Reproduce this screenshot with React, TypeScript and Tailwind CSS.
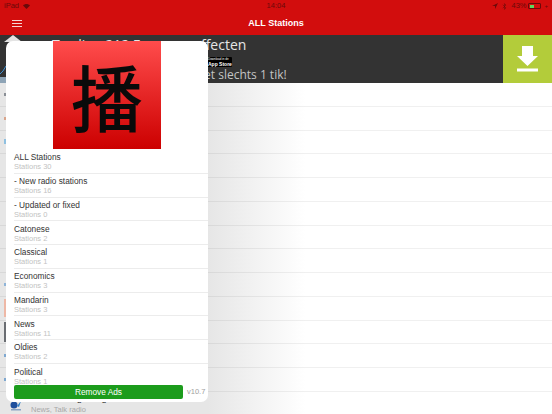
import React from 'react';
import { Bluetooth } from 'lucide-react';

const categories = [
  { name: 'ALL Stations', count: 30 },
  { name: '- New radio stations', count: 16 },
  { name: '- Updated or fixed', count: 0 },
  { name: 'Catonese', count: 2 },
  { name: 'Classical', count: 1 },
  { name: 'Economics', count: 3 },
  { name: 'Mandarin', count: 3 },
  { name: 'News', count: 11 },
  { name: 'Oldies', count: 2 },
  { name: 'Political', count: 1 },
];

// bits of the station logos that peek out left of the popover
const stationIcons = [
  'h-[3px] bg-[#8a8f96]',
  'h-[3px] bg-[#d9a58c]',
  'h-[5px] bg-[#8fc0e0]',
  'h-0',
  'h-0',
  'h-0',
  'h-0',
  'h-0',
  'h-[3px] bg-[#8fb4d8]',
  'h-[18px] bg-[#eeb8a6]',
  'h-[20px] bg-[#6a6d72]',
  'h-[3px] bg-[#7fa8d0]',
  'h-[3px] bg-[#7fa8d0]',
];

const StatusBar: React.FC = () => (
  <div className="flex h-[12px] items-center justify-between px-[4px] text-[7.500px] text-[#6a0a0a]">
    <div className="flex w-[100px] items-center gap-[4px]">
      <span>iPad</span>
      <svg width="7" height="5" viewBox="0 0 14 10" fill="currentColor">
        <path d="M7 10 0 3c4-4 10-4 14 0z" />
      </svg>
    </div>
    <span>14:04</span>
    <div className="flex w-[100px] items-center justify-end gap-[2px]">
      <svg width="6" height="6" viewBox="0 0 10 10" fill="currentColor">
        <path d="M10 0 0 5h5v5z" />
      </svg>
      <Bluetooth size={7} strokeWidth={2} className="mx-[1px]" />
      <span>43%</span>
      <div className="flex h-[6px] w-[13px] items-stretch rounded-[1px] border-[0.5px] border-[#6a0a0a] p-[0.5px]">
        <div className="w-[43%] bg-[#5fd85f]" />
      </div>
      <span className="ml-[1px] text-[6px] leading-none">+</span>
    </div>
  </div>
);

const NavRow: React.FC = () => (
  <div className="grid h-[23px] grid-cols-[1fr_auto_1fr] items-center pl-[12px] pr-[12px]">
    <div className="flex w-[10px] flex-col gap-[2px]">
      <div className="h-[1px] bg-[#f6d5d5]" />
      <div className="h-[1px] bg-[#f6d5d5]" />
      <div className="h-[1px] bg-[#f6d5d5]" />
    </div>
    <span className="text-[9px] font-bold text-white">ALL Stations</span>
    <div />
  </div>
);

const AdBanner: React.FC = () => (
  <div className="relative flex h-[48px] bg-[#333333]">
    <svg className="absolute left-0 top-[28px]" width="6" height="14" viewBox="0 0 6 14" fill="none">
      <path d="M0 11 3 8 6 3" stroke="#3f8fd0" strokeWidth="1" />
    </svg>
    <div className="absolute bottom-0 left-0 h-[6px] w-[6px] bg-[#8ea4b6]" />
    <div className="flex min-w-0 flex-1 flex-col font-['Open_Sans',sans-serif]">
      <div className="h-[20px] whitespace-nowrap pl-[52px] text-[14px] leading-[20px] text-[#e6e6e6]">
        Trading 212 Forex en effecten
      </div>
      <div className="ml-[207px] mt-[2px] flex h-[11px] w-[25px] flex-col justify-center whitespace-nowrap rounded-[1px] bg-black pl-[1px] font-['Liberation_Sans',sans-serif] text-white">
        <span className="text-[3px] leading-[3px]">Download in de</span>
        <span className="text-[5px] font-bold leading-[6px]">App Store</span>
      </div>
      <div className="whitespace-nowrap pl-[132px] text-[12px] leading-[16px] text-[#c4c4c4]">
        Handel nu met slechts 1 tik!
      </div>
    </div>
    <div className="flex w-[49px] shrink-0 items-center justify-center bg-[#b3cc3a]">
      <svg width="21" height="26" viewBox="0 0 21 26" fill="white">
        <path d="M5 0h11v10h5L10.500 20 0 10h5z" />
        <rect x="0" y="22.500" width="21" height="3" />
      </svg>
    </div>
  </div>
);

const StationList: React.FC = () => (
  <div className="h-[331px] overflow-hidden bg-[linear-gradient(90deg,#e6e6e6_0,#e6e6e6_208px,#ffffff_305px)]">
    {stationIcons.map((color, i) => (
      <div key={i} className="flex h-[23.750px] items-center border-b border-black/[0.06] pl-[4px]">
        <div className={`w-[2px] ${color}`} />
      </div>
    ))}
    <div className="flex items-start gap-[9px] pl-[10px] font-['Liberation_Sans',sans-serif]">
      <svg className="mt-[5px]" width="12" height="14" viewBox="0 0 12 14">
        <circle cx="4" cy="8" r="3.500" fill="#1f4f9c" />
        <path d="M7 9 11 4 9 10z" fill="#2f7fc8" />
        <rect x="1" y="12" width="10" height="1.500" fill="#8aa4c4" />
      </svg>
      <div className="whitespace-nowrap">
        <div className="text-[9.500px] leading-[11px] text-[#222]">RTHK Hong Kong Radio 1 Talk time</div>
        <div className="mt-[2px] text-[7.500px] leading-[10px] text-[#a8a8a8]">News, Talk radio</div>
      </div>
    </div>
  </div>
);

const MenuPopover: React.FC = () => (
  <>
    <svg className="absolute left-[4px] top-[35px]" width="18" height="7" viewBox="0 0 18 7">
      <path d="M9 0 18 7H0z" fill="#e4e4e4" />
    </svg>
    <div className="absolute left-[6px] top-[41px] h-[361px] w-[202px] overflow-hidden rounded-[7px] bg-white font-['Liberation_Sans',sans-serif]">
      <div className="mx-auto flex h-[108px] w-[108px] items-center justify-center bg-[linear-gradient(180deg,#ff4c4c,#cc0000)]">
        <span className="font-['Noto_Sans_CJK_SC',sans-serif] text-[72px] font-medium leading-[108px] text-[#0a0a0a]">播</span>
      </div>
      <div className="mt-[1px] h-[235px] overflow-hidden">
        {categories.map((c) => (
          <div key={c.name} className="ml-[8px] flex h-[23.750px] flex-col justify-center border-b border-[#ececec] pt-[1px] last:border-b-0">
            <div className="text-[8.300px] leading-[10px] text-[#333]">{c.name}</div>
            <div className="text-[7.500px] leading-[9px] text-[#c2c2c2]">Stations {c.count}</div>
          </div>
        ))}
      </div>
      <div className="flex items-center pl-[8px]">
        <button className="h-[14px] w-[169px] rounded-[2px] bg-[#1c9c1c] text-[8.300px] leading-[14px] text-white">
          Remove Ads
        </button>
        <span className="ml-[4px] text-[7.500px] text-[#a0a0a0]">v10.7</span>
      </div>
    </div>
  </>
);

const App: React.FC = () => (
  <div className="relative h-[414px] w-[552px] overflow-hidden bg-white font-['Liberation_Sans',sans-serif]">
    <div className="h-[35px] bg-[#d20d0d]">
      <StatusBar />
      <NavRow />
    </div>
    <AdBanner />
    <StationList />
    <MenuPopover />
  </div>
);

export default App;
